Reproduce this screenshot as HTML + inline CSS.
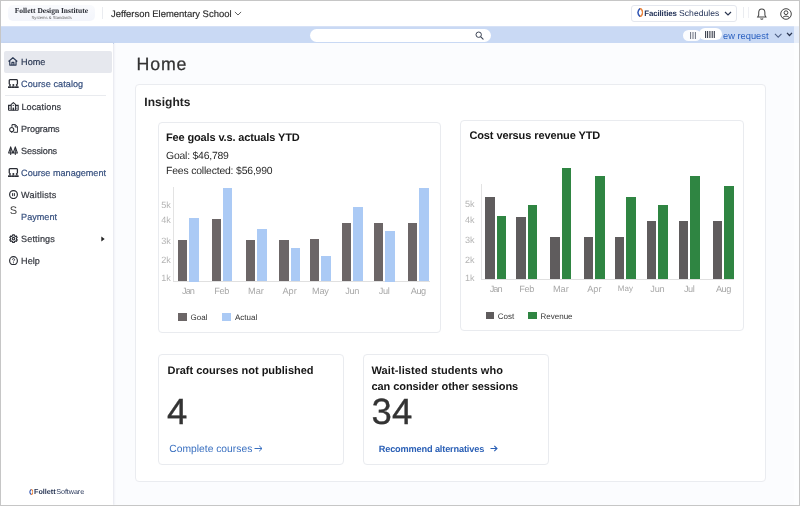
<!DOCTYPE html>
<html lang="en">
<head>
<meta charset="utf-8">
<title>Home</title>
<style>
*{box-sizing:border-box;margin:0;padding:0}
html,body{width:800px;height:506px;overflow:hidden;background:#fbfcfe}
body{position:relative;text-rendering:geometricPrecision;font-family:"Liberation Sans",sans-serif;color:#2b2b2b}
.abs{position:absolute}
.t{position:absolute;white-space:nowrap;line-height:1}
#header,#bluebar,#sidebar,#main{will-change:transform}
#frame{position:absolute;left:0;top:0;width:800px;height:506px;border:1px solid #c6c6c6;z-index:50;pointer-events:none}
#header{position:absolute;left:1px;top:1px;width:798px;height:26px;background:#fff;border-bottom:1px solid #d6e1f6}
#bluebar{position:absolute;left:1px;top:27px;width:798px;height:16.5px;background:#c9d9f4}
#sidebar{position:absolute;left:1px;top:43px;width:112.4px;z-index:2;height:462px;background:#fff;box-shadow:1px 0 2px rgba(120,130,160,.18)}
#main{position:absolute;left:114px;top:43px;width:685px;height:462px;background:#fbfcfe}
.nav{position:absolute;left:20.1px;font-size:9.1px;line-height:12px;white-space:nowrap;color:#34373f;-webkit-text-stroke:.2px}
.nav.b{color:#37507f}
.ico{position:absolute}
.card{position:absolute;background:#fff;border:1px solid #e9ebef;border-radius:4px}
.bar{position:absolute}
.yl{position:absolute;font-size:9.1px;line-height:10px;color:#b4b4b4;white-space:nowrap;font-family:"Liberation Sans",sans-serif}
.xl{position:absolute;font-size:9.2px;line-height:10px;color:#a8a8a8;white-space:nowrap;transform:translateX(-50%)}
.lg{position:absolute;font-size:8px;line-height:10px;color:#333;white-space:nowrap}
</style>
</head>
<body>
<div id="header">
  <div class="abs" style="left:7px;top:3.5px;width:86.5px;height:16.5px;border-radius:5px;background:linear-gradient(180deg,#f9fafd,#f3f5fb)"></div>
  <span class="t" id="fdi" style="left:13.7px;top:5.5px;font-family:'Liberation Serif',serif;font-weight:bold;font-size:7.5px;color:#2a2d35">Follett Design Institute</span>
  <span class="t" id="sas" style="left:30.5px;top:14.6px;font-size:4.2px;color:#666;font-family:'Liberation Sans',sans-serif">Systems &amp; Standards</span>
  <div class="abs" style="left:100.9px;top:6px;width:1px;height:11.5px;background:#eaecf0"></div>
  <span class="t" id="school" style="-webkit-text-stroke:.15px;left:110px;top:7px;font-size:9.45px;color:#2a2a2a;line-height:13px">Jefferson Elementary School</span>
  <svg class="abs" style="left:233.3px;top:10.3px" width="8" height="5.4" viewBox="0 0 9 6"><path d="M1 1 L4.5 4.5 L8 1" fill="none" stroke="#555" stroke-width="1.05"/></svg>

  <div class="abs" style="left:630px;top:4px;width:106px;height:16.5px;border:1px solid #e4e7ee;border-radius:3px;background:#fff"></div>
  <svg class="abs" style="left:635.6px;top:7.2px" width="6.6" height="9" viewBox="0 0 6.6 9"><path d="M3.1 .4 C.2 3.2 .2 5.8 3.1 8.6" fill="none" stroke="#2f55b5" stroke-width="1.5" stroke-linecap="round"/><path d="M3.5 .4 C6.4 3.2 6.4 5.8 3.5 8.6" fill="none" stroke="#e8813a" stroke-width="1.5" stroke-linecap="round"/></svg>
  <span class="t" id="fac" style="left:643.2px;top:7px;font-size:7.9px;font-weight:bold;color:#1f2f55;line-height:11px;letter-spacing:-.12px">Facilities</span>
  <span class="t" id="sch" style="left:678.1px;top:7px;font-size:8.6px;color:#1f2f55;line-height:11px">Schedules</span>
  <svg class="abs" style="left:723px;top:10px" width="8" height="6" viewBox="0 0 8 6"><path d="M1 1 L4 4 L7 1" fill="none" stroke="#2a3550" stroke-width="1.2"/></svg>
  <div class="abs" style="left:742.3px;top:6px;width:1px;height:11px;background:#eaecf0"></div>
  <div class="abs" style="left:747.2px;top:6px;width:1px;height:11px;background:#eff0f4"></div>
  <svg class="abs" style="left:755.4px;top:6.8px" width="11.6" height="12.4" viewBox="0 0 11 12"><path d="M5.5 1 C3.5 1 2.5 2.6 2.5 4.6 L2.5 7 L1.5 8.7 L9.5 8.7 L8.5 7 L8.5 4.6 C8.5 2.6 7.5 1 5.5 1Z" fill="none" stroke="#444" stroke-width="1"/><path d="M4.3 10.2 C4.6 11 6.4 11 6.7 10.2" fill="none" stroke="#444" stroke-width="1"/></svg>
  <svg class="abs" style="left:779px;top:7px" width="12" height="12" viewBox="0 0 12 12"><circle cx="6" cy="6" r="5.3" fill="none" stroke="#444" stroke-width="1"/><circle cx="6" cy="4.7" r="1.9" fill="none" stroke="#444" stroke-width="1"/><path d="M2.6 9.8 C3.4 7.6 8.6 7.6 9.4 9.8" fill="none" stroke="#444" stroke-width="1"/></svg>
</div>

<div id="bluebar">
  <div class="abs" style="left:309px;top:2px;width:181px;height:13px;border-radius:7px;background:#fff"></div>
  <svg class="abs" style="left:473.5px;top:4px" width="9" height="9" viewBox="0 0 9 9"><circle cx="3.7" cy="3.7" r="2.7" fill="none" stroke="#3b4354" stroke-width="1"/><path d="M5.8 5.8 L8.1 8.1" stroke="#3b4354" stroke-width="1.1" stroke-linecap="round"/></svg>
  <div class="abs" style="left:681.5px;top:2.5px;width:18px;height:11px;border-radius:6px;background:#fbfcfe"></div>
  <svg class="abs" style="left:689px;top:5px" width="6" height="7" viewBox="0 0 6 7"><path d="M.6 0V7M3 0V7M5.4 0V7" stroke="#5a6172" stroke-width=".9"/></svg>
  <div class="abs" style="left:697.5px;top:1px;width:23.5px;height:12px;border-radius:6px;background:#fff"></div>
  <svg class="abs" style="left:704px;top:3.5px" width="10" height="7" viewBox="0 0 10 7"><path d="M.6 0V7M2.6 0V7M4.9 0V7M7.2 0V7M9.3 0V7" stroke="#3a3f4c" stroke-width="1.1"/></svg>
  <span class="t" id="req" style="left:722px;top:3px;font-size:9.3px;color:#2a60c0;line-height:12px">ew request</span>
  <svg class="abs" style="left:773px;top:6.2px" width="8.4" height="5.6" viewBox="0 0 9 6"><path d="M1 1 L4.5 4.5 L8 1" fill="none" stroke="#4d5f85" stroke-width="1.1"/></svg>
  <svg class="abs" style="left:784.5px;top:5.3px" width="7" height="5" viewBox="0 0 8 6"><path d="M1 1 L4 4.2 L7 1" fill="none" stroke="#27324d" stroke-width="1.5"/></svg>
</div>

<div id="sidebar">
  <div class="abs" style="left:3px;top:7.9px;width:108px;height:21.8px;background:#e6e8ee;border-radius:2px"></div>
  <div class="abs" style="left:4px;top:51.5px;width:101px;height:1px;background:#e9ebef"></div>
  <span class="nav" id="n1" style="top:13px;color:#2d3a55">Home</span>
  <span class="nav b" id="n2" style="top:35px;letter-spacing:.07px">Course catalog</span>
  <span class="nav" id="n3" style="top:57.6px;letter-spacing:.1px;left:20.4px">Locations</span>
  <span class="nav" id="n4" style="top:79.6px;letter-spacing:-.12px">Programs</span>
  <span class="nav" id="n5" style="top:101.6px;letter-spacing:-.12px">Sessions</span>
  <span class="nav b" id="n6" style="top:123.9px">Course management</span>
  <span class="nav" id="n7" style="top:145.6px;letter-spacing:.2px">Waitlists</span>
  <span class="nav b" id="n8" style="top:167.6px">Payment</span>
  <span class="nav" id="n9" style="top:189.5px;letter-spacing:.12px">Settings</span>
  <span class="nav" id="n10" style="top:212.1px">Help</span>
  <span class="t" id="sS" style="left:8.8px;top:163.4px;font-size:11px;color:#444;line-height:11px">S</span>
  <svg class="abs" style="left:100.3px;top:192.5px" width="4" height="6" viewBox="0 0 4 6"><path d="M.3 .6 L3.7 3 L.3 5.4Z" fill="#222"/></svg>
  <!-- icons -->
  <svg class="ico" style="left:7.4px;top:14.4px" width="9.8" height="8.6" viewBox="0 0 9.5 8.3" preserveAspectRatio="none"><path d="M.5 4.3 L4.75 .7 L9 4.3 M1.7 3.6 V7.8 H7.8 V3.6 M3.8 7.8 V5.2 H5.7 V7.8" fill="none" stroke="#2d3a55" stroke-width="1.15" stroke-linejoin="round"/></svg>
  <svg class="ico" style="left:7.3px;top:36.0px" width="10.7" height="9.1" viewBox="0 0 11 9" preserveAspectRatio="none"><path d="M1.3 5.2 V1.5 Q1.3 .65 2.1 .65 H8.9 Q9.7 .65 9.7 1.5 V5.2" fill="none" stroke="#2a2d35" stroke-width="1.3"/><circle cx="2" cy="5.9" r="1.05" fill="#2a2d35"/><circle cx="5.5" cy="5.9" r="1.05" fill="#2a2d35"/><circle cx="9" cy="5.9" r="1.05" fill="#2a2d35"/><path d="M0 9 V7.6 Q0 7.2 .4 7.2 H3.4 Q3.8 7.2 3.8 7.6 V9Z M3.9 9 V7.6 Q3.9 7.2 4.3 7.2 H6.7 Q7.1 7.2 7.1 7.6 V9Z M7.2 9 V7.6 Q7.2 7.2 7.6 7.2 H10.6 Q11 7.2 11 7.6 V9Z" fill="#2a2d35"/></svg>
  <svg class="ico" style="left:7.2px;top:59.1px" width="10.7" height="8.8" viewBox="0 0 10.7 8.8" preserveAspectRatio="none"><path d="M3.2 8.3 V2.4 L5.35 .6 L7.5 2.4 V8.3 M.5 8.3 V3.4 H3.2 M7.5 3.4 H10.2 V8.3 M.5 8.3 H10.2" fill="none" stroke="#2a2d35" stroke-width="1.05"/><path d="M4.6 3.4 H6.1 M1.4 5 H2.3 M1.4 6.6 H2.3 M8.4 5 H9.3 M8.4 6.6 H9.3" stroke="#2a2d35" stroke-width=".9"/><path d="M4.6 8.3 V5.6 H6.1 V8.3Z" fill="#2a2d35"/></svg>
  <svg class="ico" style="left:7.8px;top:81.1px" width="9.1" height="8.9" viewBox="0 0 9.1 8.9" preserveAspectRatio="none"><path d="M3 2.8 V.6 H6.4 L8.6 2.8 V8.3 H4.6 M6.2 .8 V3 H8.4" fill="none" stroke="#2a2d35" stroke-width="1"/><circle cx="2.7" cy="5.6" r="2.1" fill="none" stroke="#2a2d35" stroke-width="1.05"/><path d="M2 8.2 H3.4" stroke="#2a2d35" stroke-width="1"/></svg>
  <svg class="ico" style="left:7.2px;top:102.6px" width="10.0" height="9.3" viewBox="0 0 10 9.3" preserveAspectRatio="none"><path d="M2.7 .8 L.6 7 H4.8 Z M7.3 .8 L5.2 7 H9.4 Z" fill="none" stroke="#2a2d35" stroke-width="1.05" stroke-linejoin="round"/><path d="M2.7 3.2 V9.2 M7.3 3.2 V9.2" stroke="#2a2d35" stroke-width="1"/></svg>
  <svg class="ico" style="left:7.3px;top:125.0px" width="10.7" height="9.1" viewBox="0 0 11 9" preserveAspectRatio="none"><path d="M1.3 5.2 V1.5 Q1.3 .65 2.1 .65 H8.9 Q9.7 .65 9.7 1.5 V5.2" fill="none" stroke="#2a2d35" stroke-width="1.3"/><circle cx="2" cy="5.9" r="1.05" fill="#2a2d35"/><circle cx="5.5" cy="5.9" r="1.05" fill="#2a2d35"/><circle cx="9" cy="5.9" r="1.05" fill="#2a2d35"/><path d="M0 9 V7.6 Q0 7.2 .4 7.2 H3.4 Q3.8 7.2 3.8 7.6 V9Z M3.9 9 V7.6 Q3.9 7.2 4.3 7.2 H6.7 Q7.1 7.2 7.1 7.6 V9Z M7.2 9 V7.6 Q7.2 7.2 7.6 7.2 H10.6 Q11 7.2 11 7.6 V9Z" fill="#2a2d35"/></svg>
  <svg class="ico" style="left:8.0px;top:146.9px" width="9.0" height="9.2" viewBox="0 0 9 9.2" preserveAspectRatio="none"><ellipse cx="4.5" cy="4.6" rx="3.9" ry="4" fill="none" stroke="#2a2d35" stroke-width="1.15"/><path d="M3.6 3.1 V6.1 M5.4 3.1 V6.1" stroke="#2a2d35" stroke-width="1"/></svg>
  <svg class="ico" style="left:8.0px;top:191.0px" width="9.0" height="9.3" viewBox="0 0 10 10" preserveAspectRatio="none"><path d="M4.06 0.80 L5.94 0.80 L5.98 1.85 L7.24 2.58 L8.16 2.09 L9.10 3.71 L8.22 4.27 L8.22 5.73 L9.10 6.29 L8.16 7.91 L7.24 7.42 L5.98 8.15 L5.94 9.20 L4.06 9.20 L4.02 8.15 L2.76 7.42 L1.84 7.91 L0.90 6.29 L1.78 5.73 L1.78 4.27 L0.90 3.71 L1.84 2.09 L2.76 2.58 L4.02 1.85Z" fill="none" stroke="#2a2d35" stroke-width="1.25" stroke-linejoin="round"/><circle cx="5" cy="5" r="1.35" fill="none" stroke="#2a2d35" stroke-width="1.15"/></svg>
  <svg class="ico" style="left:8.0px;top:213.0px" width="9.0" height="9.3" viewBox="0 0 9 9.3" preserveAspectRatio="none"><ellipse cx="4.5" cy="4.65" rx="3.9" ry="4.05" fill="none" stroke="#2a2d35" stroke-width="1.15"/><path d="M3.4 3.7 C3.4 2.3 5.6 2.3 5.6 3.7 C5.6 4.5 4.5 4.6 4.5 5.5" fill="none" stroke="#2a2d35" stroke-width=".9"/><circle cx="4.5" cy="6.8" r=".55" fill="#2a2d35"/></svg>
  <!-- footer logo -->
  <svg class="abs" style="left:27.7px;top:446px" width="4.8" height="6" viewBox="0 0 6.6 9"><path d="M3.1 .5 C.2 3.2 .2 5.8 3.1 8.5" fill="none" stroke="#2f55b5" stroke-width="1.6" stroke-linecap="round"/><path d="M3.5 .5 C6.4 3.2 6.4 5.8 3.5 8.5" fill="none" stroke="#e8813a" stroke-width="1.6" stroke-linecap="round"/></svg>
  <span class="t" id="fol" style="left:33px;top:444px;font-size:7.2px;font-weight:bold;color:#1f2d4d;line-height:9px;letter-spacing:0px">Follett</span>
  <span class="t" id="sof" style="left:55.2px;top:444px;font-size:7.2px;color:#2b3a5c;line-height:9px;letter-spacing:-.05px">Software</span>
</div>

<div id="main">
  <span class="t" id="home" style="-webkit-text-stroke:.25px;left:22.5px;top:11px;font-size:17.8px;color:#333;line-height:20px;letter-spacing:.85px">Home</span>
  <div class="card" id="panel" style="left:21px;top:41px;width:631px;height:398px;border-color:#eaecf0"></div>
  <span class="t" id="ins" style="left:30.3px;top:52px;font-size:12px;font-weight:bold;color:#222;line-height:14px;letter-spacing:.03px">Insights</span>

  <!-- card 1 -->
  <div class="card" style="left:44px;top:79px;width:283px;height:211px"></div>
  <span class="t" id="c1t" style="left:52px;top:88px;font-size:11px;font-weight:bold;color:#161616;line-height:14px;letter-spacing:-.14px">Fee goals v.s. actuals YTD</span>
  <span class="t" id="c1a" style="left:52px;top:107.3px;font-size:10.4px;color:#2a2a2a;line-height:13px;letter-spacing:-.2px">Goal: $46,789</span>
  <span class="t" id="c1b" style="left:52px;top:121.5px;font-size:10.4px;color:#2a2a2a;line-height:13px;letter-spacing:-.17px">Fees collected: $56,990</span>
  <div class="abs" style="left:58.5px;top:143.5px;width:1px;height:95px;background:#e3e3e3"></div>
  <div class="abs" style="left:58.5px;top:237.8px;width:257px;height:1px;background:#e0e0e0"></div>
  <span class="yl" style="left:47.3px;top:156.9px">5k</span>
  <span class="yl" style="left:47.3px;top:172px">4k</span>
  <span class="yl" style="left:47.3px;top:192.5px">3k</span>
  <span class="yl" style="left:47.3px;top:211.6px">2k</span>
  <span class="yl" style="left:47.3px;top:229.9px">1k</span>
  <div id="bars1">
  <div class="bar" style="left:64.0px;top:196.8px;width:9.4px;height:41.7px;background:#6c6667"></div>
  <div class="bar" style="left:75.2px;top:175.0px;width:9.4px;height:63.5px;background:#abcaf5"></div>
  <div class="bar" style="left:97.7px;top:176.4px;width:9.4px;height:62.1px;background:#6c6667"></div>
  <div class="bar" style="left:108.9px;top:144.6px;width:9.4px;height:93.9px;background:#abcaf5"></div>
  <div class="bar" style="left:131.9px;top:196.6px;width:9.4px;height:41.9px;background:#6c6667"></div>
  <div class="bar" style="left:143.3px;top:186.4px;width:9.4px;height:52.1px;background:#abcaf5"></div>
  <div class="bar" style="left:165.4px;top:196.6px;width:9.4px;height:41.9px;background:#6c6667"></div>
  <div class="bar" style="left:176.5px;top:205.4px;width:9.4px;height:33.1px;background:#abcaf5"></div>
  <div class="bar" style="left:196.0px;top:196.1px;width:9.4px;height:42.4px;background:#6c6667"></div>
  <div class="bar" style="left:207.4px;top:213.2px;width:9.4px;height:25.3px;background:#abcaf5"></div>
  <div class="bar" style="left:228.0px;top:180.4px;width:9.4px;height:58.1px;background:#6c6667"></div>
  <div class="bar" style="left:239.4px;top:163.8px;width:9.4px;height:74.7px;background:#abcaf5"></div>
  <div class="bar" style="left:259.8px;top:179.7px;width:9.4px;height:58.8px;background:#6c6667"></div>
  <div class="bar" style="left:271.4px;top:188.0px;width:9.4px;height:50.5px;background:#abcaf5"></div>
  <div class="bar" style="left:294.0px;top:179.7px;width:9.4px;height:58.8px;background:#6c6667"></div>
  <div class="bar" style="left:305.4px;top:145.1px;width:9.4px;height:93.4px;background:#abcaf5"></div>
  </div><!--e1-->
  <span class="xl" style="left:74px;top:242.8px;letter-spacing:-0.9px">Jan</span>
  <span class="xl" style="left:107.7px;top:242.8px;letter-spacing:-0.4px">Feb</span>
  <span class="xl" style="left:141.9px;top:242.8px">Mar</span>
  <span class="xl" style="left:175.6px;top:242.8px">Apr</span>
  <span class="xl" style="left:206.4px;top:242.8px;letter-spacing:-0.2px">May</span>
  <span class="xl" style="left:238.2px;top:242.8px;letter-spacing:-0.3px">Jun</span>
  <span class="xl" style="left:270px;top:242.8px;letter-spacing:-0.4px">Jul</span>
  <span class="xl" style="left:304.2px;top:242.8px;letter-spacing:-0.5px">Aug</span>
  <div class="abs" style="left:64.2px;top:270px;width:9.3px;height:7.5px;background:#6c6667"></div>
  <span class="lg" style="left:76.5px;top:269.6px">Goal</span>
  <div class="abs" style="left:107.8px;top:270px;width:9.3px;height:7.5px;background:#abcaf5"></div>
  <span class="lg" style="left:121px;top:269.6px">Actual</span>

  <!-- card 2 -->
  <div class="card" style="left:346px;top:77px;width:284px;height:210.5px"></div>
  <span class="t" id="c2t" style="left:355.4px;top:86.1px;font-size:11px;font-weight:bold;color:#161616;line-height:14px;letter-spacing:-.1px">Cost versus revenue YTD</span>
  <div class="abs" style="left:367.3px;top:141px;width:1px;height:95px;background:#e3e3e3"></div>
  <div class="abs" style="left:367.3px;top:236px;width:253px;height:1px;background:#e0e0e0"></div>
  <span class="yl" style="left:351px;top:156.1px">5k</span>
  <span class="yl" style="left:351px;top:172.1px">4k</span>
  <span class="yl" style="left:351px;top:191.5px">3k</span>
  <span class="yl" style="left:351px;top:211.6px">2k</span>
  <span class="yl" style="left:351px;top:229.6px">1k</span>
  <div id="bars2">
  <div class="bar" style="left:371.4px;top:153.8px;width:9.4px;height:82.5px;background:#5f5c5d"></div>
  <div class="bar" style="left:382.8px;top:172.5px;width:9.4px;height:63.8px;background:#2f8542"></div>
  <div class="bar" style="left:402.2px;top:173.5px;width:9.4px;height:62.8px;background:#5f5c5d"></div>
  <div class="bar" style="left:413.9px;top:161.9px;width:9.4px;height:74.4px;background:#2f8542"></div>
  <div class="bar" style="left:436.4px;top:193.9px;width:9.4px;height:42.4px;background:#5f5c5d"></div>
  <div class="bar" style="left:447.8px;top:125.1px;width:9.4px;height:111.2px;background:#2f8542"></div>
  <div class="bar" style="left:469.9px;top:193.9px;width:9.4px;height:42.4px;background:#5f5c5d"></div>
  <div class="bar" style="left:481.3px;top:132.9px;width:9.4px;height:103.4px;background:#2f8542"></div>
  <div class="bar" style="left:501.0px;top:193.9px;width:9.4px;height:42.4px;background:#5f5c5d"></div>
  <div class="bar" style="left:512.3px;top:154.3px;width:9.4px;height:82.0px;background:#2f8542"></div>
  <div class="bar" style="left:533.0px;top:178.2px;width:9.4px;height:58.1px;background:#5f5c5d"></div>
  <div class="bar" style="left:544.4px;top:161.6px;width:9.4px;height:74.7px;background:#2f8542"></div>
  <div class="bar" style="left:564.8px;top:177.8px;width:9.4px;height:58.5px;background:#5f5c5d"></div>
  <div class="bar" style="left:576.2px;top:133.4px;width:9.4px;height:102.9px;background:#2f8542"></div>
  <div class="bar" style="left:599.0px;top:177.8px;width:9.4px;height:58.5px;background:#5f5c5d"></div>
  <div class="bar" style="left:610.4px;top:142.6px;width:9.4px;height:93.7px;background:#2f8542"></div>
  </div><!--e2-->
  <span class="xl" style="left:381.7px;top:241.3px;letter-spacing:-0.9px">Jan</span>
  <span class="xl" style="left:412.7px;top:241.3px;letter-spacing:-0.4px">Feb</span>
  <span class="xl" style="left:446.8px;top:241.3px">Mar</span>
  <span class="xl" style="left:480.3px;top:241.3px">Apr</span>
  <span class="xl" style="left:511.4px;top:240.7px;font-size:8px">May</span>
  <span class="xl" style="left:543.3px;top:241.3px;letter-spacing:-0.3px">Jun</span>
  <span class="xl" style="left:575.2px;top:241.3px;letter-spacing:-0.4px">Jul</span>
  <span class="xl" style="left:609.4px;top:241.3px;letter-spacing:-0.5px">Aug</span>
  <div class="abs" style="left:371.6px;top:269.2px;width:8.6px;height:7.2px;background:#5f5c5d"></div>
  <span class="lg" style="left:383.7px;top:268.6px">Cost</span>
  <div class="abs" style="left:414.1px;top:269.2px;width:8.6px;height:7.2px;background:#2f8542"></div>
  <span class="lg" style="left:426.5px;top:268.6px">Revenue</span>

  <!-- card 3 -->
  <div class="card" style="left:44px;top:311px;width:185.5px;height:111px"></div>
  <span class="t" id="c3t" style="left:53.5px;top:320.5px;font-size:11px;font-weight:bold;color:#161616;line-height:14px">Draft courses not published</span>
  <span class="t" id="c3n" style="-webkit-text-stroke:.35px;left:53.1px;top:350.3px;font-size:36.5px;color:#333;line-height:38px">4</span>
  <span class="t" id="c3l" style="left:55.3px;top:399.5px;font-size:10.3px;color:#3a70c0;line-height:13px">Complete courses</span>
  <svg class="abs" style="left:140.3px;top:401.9px" width="9" height="7" viewBox="0 0 9 7"><path d="M.5 3.5 H8 M5.2 .8 L8 3.5 L5.2 6.2" fill="none" stroke="#3a70c0" stroke-width="1"/></svg>

  <!-- card 4 -->
  <div class="card" style="left:249px;top:311px;width:185.5px;height:111px"></div>
  <span class="t" id="c4t1" style="left:257.5px;top:320.5px;font-size:11px;font-weight:bold;color:#161616;line-height:14px;letter-spacing:.1px">Wait-listed students who</span>
  <span class="t" id="c4t2" style="left:257.5px;top:336.9px;font-size:11px;font-weight:bold;color:#161616;line-height:14px;letter-spacing:-.07px">can consider other sessions</span>
  <span class="t" id="c4n" style="-webkit-text-stroke:.35px;left:257.6px;top:350.3px;font-size:36.5px;color:#333;line-height:38px">34</span>
  <span class="t" id="c4l" style="left:264.7px;top:399.5px;font-size:9.2px;font-weight:bold;color:#2b60b6;line-height:13px;letter-spacing:-.15px">Recommend alternatives</span>
  <svg class="abs" style="left:376px;top:402px" width="8" height="7" viewBox="0 0 8 7"><path d="M.5 3.5 H7 M4.3 .8 L7 3.5 L4.3 6.2" fill="none" stroke="#2b60b6" stroke-width="1.1"/></svg>
</div>

<div class="abs" style="left:794px;top:1px;width:5px;height:504px;background:rgba(255,255,255,.55)"></div>
<div id="frame"></div>
</body>
</html>
